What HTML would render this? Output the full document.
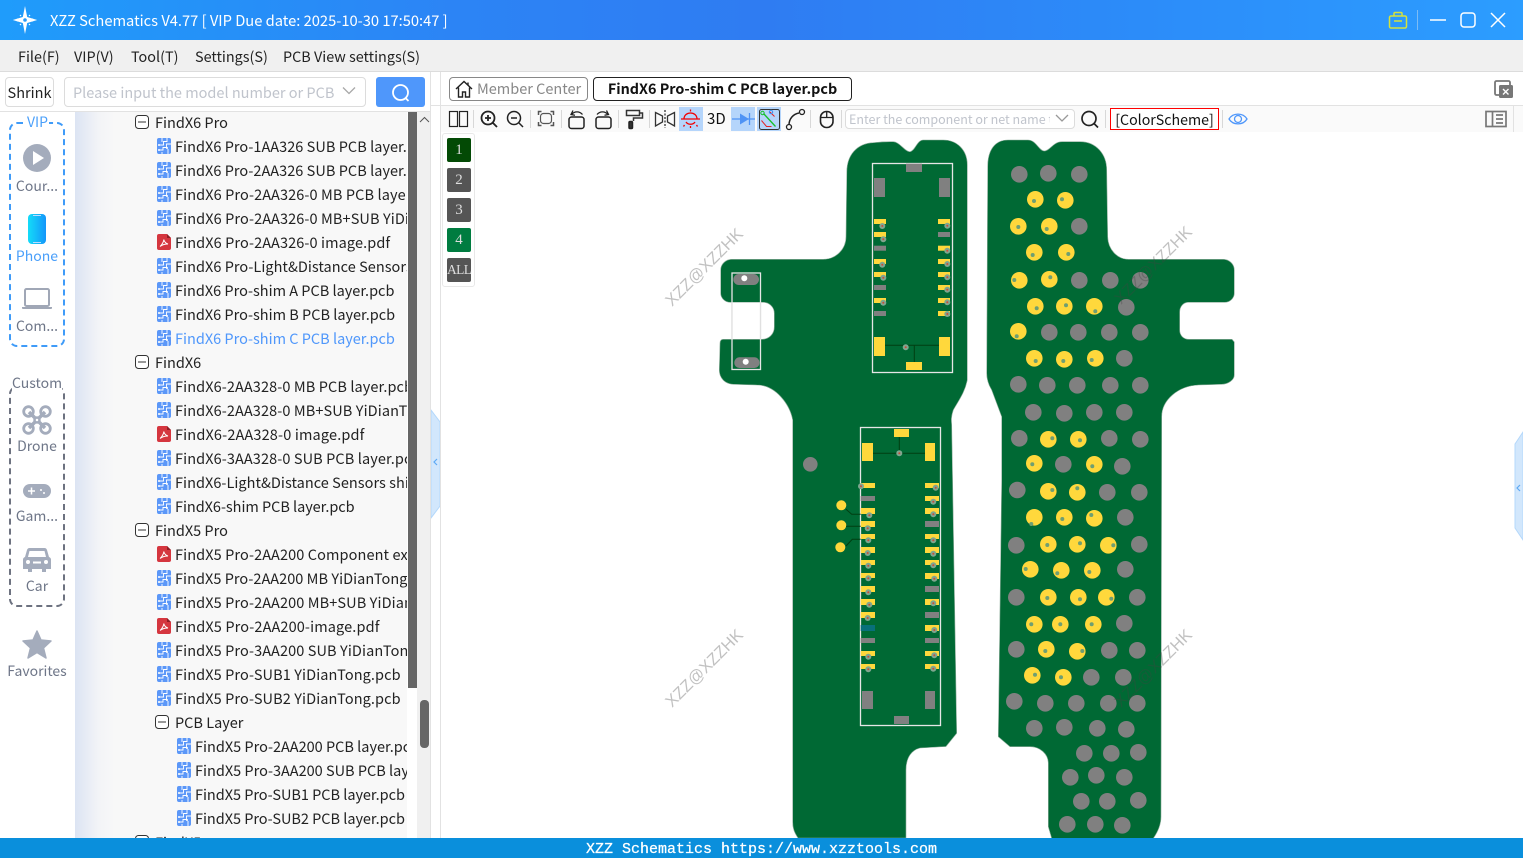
<!DOCTYPE html>
<html><head><meta charset="utf-8"><style>
html,body{margin:0;padding:0;width:1523px;height:858px;overflow:hidden;background:#fff;font-family:"Noto Sans CJK SC","Liberation Sans",sans-serif;color:#222}
.a{position:absolute;white-space:nowrap}
#title{left:0;top:0;width:1523px;height:40px;background:linear-gradient(90deg,#1f9cfb 0,#2c84f5 30%,#2f7cf2 50%,#2c8cf9 75%,#2c9dff 100%)}
#menu{left:0;top:40px;width:1523px;height:31px;background:#f0f0f0;border-bottom:1px solid #dcdcdc}
.m{top:47px;font-size:14.4px;line-height:20px;color:#222}
.box{box-sizing:border-box;border:1px solid #dcdcdc;border-radius:4px;background:#fff}
#tree{left:75px;top:112px;width:332px;height:726px;overflow:hidden;background:linear-gradient(90deg,#dce4f3 0,#f3f4f7 24px,#f8f8f8 40px)}
.r{position:absolute;font-size:14.5px;line-height:20px;white-space:nowrap;color:#222;margin-top:1px}
.d{letter-spacing:.1px}
.e{letter-spacing:.04px}
.s{position:absolute;font-size:14px;line-height:20px;color:#6e7688;text-align:center;width:74px;left:0}
.tb{position:absolute;top:107px;width:24px;height:24px;background:#b5d5fb}
.sep{position:absolute;top:110px;width:1px;height:18px;background:#d8d8d8}
.l{position:absolute;left:447px;width:24px;height:24px;background:#555;color:#ddd;border-radius:2px;font:15px/24px "Liberation Serif",serif;text-align:center}
</style></head><body>
<svg width="0" height="0" style="position:absolute">
<symbol id="pcb" viewBox="0 0 14 16"><rect width="14" height="16" rx="2" fill="#5b97f8"/><path d="M5 0v4M10 0v3.500H6.500V7H2M14 6H9.500v3.500H6V12H2M11 11v5M5 14v2" fill="none" stroke="#fff" stroke-width=".9"/><circle cx="2" cy="7" r="1" fill="#fff"/><circle cx="2" cy="12" r="1" fill="#fff"/><circle cx="10" cy="10" r="1" fill="#fff"/></symbol>
<symbol id="pdf" viewBox="0 0 14 16"><path d="M2 0h8l4 4v10a2 2 0 0 1-2 2H2a2 2 0 0 1-2-2V2a2 2 0 0 1 2-2z" fill="#d5363f"/><path d="M10 0l4 4h-4z" fill="#8f1f26"/><path d="M3 12.500C5 11 7 7 6.700 5.500 7.500 8 9 9.500 11 10 9 10 5.500 10.500 3 12.500z" fill="none" stroke="#fff" stroke-width="1"/></symbol>
<symbol id="min" viewBox="0 0 14 14"><rect x=".5" y=".5" width="13" height="13" rx="3" fill="#fff" stroke="#333"/><path d="M3 7h8" stroke="#333"/></symbol>
</svg>

<div id="title" class="a"></div>
<svg class="a" style="left:12px;top:5px" width="26" height="30" viewBox="0 0 26 30"><path d="M13 1l2.200 11 10 3-10 3L13 29l-2.200-11-10-3 10-3z" fill="#fff"/><circle cx="13" cy="15" r="1.800" fill="#2a9bf8"/><path d="M5.500 13.500v3M20.500 13.500v3M9 11l-1-1M17 11l1-1M9 19l-1 1M17 19l1 1" stroke="#fff" stroke-width="1.200"/></svg>
<div class="a" style="left:50px;top:11px;font-size:14.7px;line-height:20px;color:#fff">XZZ Schematics V4.77 [ VIP Due date: 2025-10-30 17:50:47 ]</div>
<svg class="a" style="left:1380px;top:0" width="143" height="40" fill="none"><path d="M11 16h14a1.500 1.500 0 0 1 1.500 1.500v9a1.500 1.500 0 0 1-1.500 1.500H11a1.500 1.500 0 0 1-1.500-1.500v-9A1.500 1.500 0 0 1 11 16zM14 16v-2.500a1 1 0 0 1 1-1h6a1 1 0 0 1 1 1V16M14 21h8" stroke="#d5e23c" stroke-width="1.500"/><path d="M37.500 10v20" stroke="#7cbcf5"/><path d="M50 20h16" stroke="#fff" stroke-width="1.500"/><rect x="81" y="13" width="14" height="14" rx="3" stroke="#fff" stroke-width="1.500"/><path d="M111 13l14 14M125 13l-14 14" stroke="#fff" stroke-width="1.500"/></svg>

<div id="menu" class="a"></div>
<div class="a m" style="left:18px">File(F)</div>
<div class="a m" style="left:74px">VIP(V)</div>
<div class="a m" style="left:131px">Tool(T)</div>
<div class="a m" style="left:195px">Settings(S)</div>
<div class="a m" style="left:283px">PCB View settings(S)</div>

<div class="a box" style="left:5px;top:77px;width:49px;height:30px;text-align:center;font-size:14.5px;line-height:30px">Shrink</div>
<div class="a box" style="left:64px;top:77px;width:302px;height:30px;font-size:14.5px;line-height:30px;color:#c0c4cc;padding-left:8px">Please input the model number or PCB</div>
<svg class="a" style="left:342px;top:86px" width="14" height="10" fill="none"><path d="M1 1.500l6 6 6-6" stroke="#a8a8a8" stroke-width="1.300"/></svg>
<div class="a" style="left:376px;top:77px;width:49px;height:30px;background:#4f97fb;border-radius:3px"></div>
<svg class="a" style="left:390px;top:82px" width="22" height="21" fill="none"><circle cx="10.500" cy="10.500" r="7.500" stroke="#fff" stroke-width="1.800"/><path d="M15.500 16l3 3" stroke="#fff" stroke-width="1.800"/></svg>
<div class="a" style="left:0;top:111px;width:430px;height:1px;background:#e2e2e2"></div>

<!-- sidebar -->
<div class="a" style="left:9px;top:122px;width:56px;height:225px;box-sizing:border-box;border:2px dashed #3f9bf8;border-radius:8px"></div>
<div class="a" style="left:26px;top:112px;padding:0 1px;background:#fff;font-size:14px;line-height:20px;color:#4a9ffa">VIP</div>
<svg class="a" style="left:23px;top:144px" width="28" height="28"><circle cx="14" cy="14" r="14" fill="#a4acbc"/><path d="M10 7l11 7-11 7z" fill="#fff"/></svg>
<div class="s" style="top:176px">Cour...</div>
<svg class="a" style="left:28px;top:214px" width="18" height="31"><defs><linearGradient id="ph" x1="0" x2="1" y1="0" y2="0"><stop offset="0" stop-color="#14dcf8"/><stop offset="1" stop-color="#1496fa"/></linearGradient></defs><rect width="18" height="30" rx="4" fill="url(#ph)"/><path d="M5 1.500h8M5 28.500h8" stroke="#bdf" stroke-width="1"/></svg>
<div class="s" style="top:246px;color:#4a9ffa">Phone</div>
<svg class="a" style="left:22px;top:288px" width="30" height="21"><rect x="3" y="1" width="24" height="17" rx="1.500" fill="#fff" stroke="#a0a7b6" stroke-width="2"/><path d="M0 19h30v1a1 1 0 0 1-1 1H1a1 1 0 0 1-1-1z" fill="#a0a7b6"/></svg>
<div class="s" style="top:316px">Com...</div>

<div class="a" style="left:9px;top:386px;width:56px;height:221px;box-sizing:border-box;border:2px dashed #6d7280;border-radius:8px"></div>
<div class="a" style="left:12px;top:373px;padding:0;background:#fff;font-size:14px;line-height:20px;color:#6e7688">Custom</div>
<svg class="a" style="left:22px;top:405px" width="30" height="30" fill="none" stroke="#a4acbc"><path d="M7 7l16 16M23 7L7 23" stroke-width="3.500"/><circle cx="6.500" cy="6.500" r="4.800" stroke-width="2.800"/><circle cx="23.500" cy="6.500" r="4.800" stroke-width="2.800"/><circle cx="6.500" cy="23.500" r="4.800" stroke-width="2.800"/><circle cx="23.500" cy="23.500" r="4.800" stroke-width="2.800"/><circle cx="15" cy="15" r="2.500" fill="#fff" stroke-width="2.500"/></svg>
<div class="s" style="top:436px">Drone</div>
<svg class="a" style="left:23px;top:484px" width="28" height="14"><rect width="28" height="14" rx="7" fill="#a4acbc"/><path d="M5 7h7M8.500 3.500v7" stroke="#fff" stroke-width="1.500"/><circle cx="18" cy="6" r="1" fill="#fff"/><circle cx="21" cy="9" r="1" fill="#fff"/></svg>
<div class="s" style="top:506px">Gam...</div>
<svg class="a" style="left:23px;top:548px" width="28" height="24"><path d="M7 0h14a3 3 0 0 1 3 2l2 7a3 3 0 0 1 2 3v9h-5v3h-4v-3H9v3H5v-3H0v-9a3 3 0 0 1 2-3l2-7a3 3 0 0 1 3-2z" fill="#a4acbc"/><path d="M6.500 3h15l1.500 6H5z" fill="#fff"/><circle cx="5" cy="14" r="2" fill="#fff"/><circle cx="23" cy="14" r="2" fill="#fff"/><path d="M10 14.500h8" stroke="#fff" stroke-width="2"/></svg>
<div class="s" style="top:576px">Car</div>
<svg class="a" style="left:22px;top:630px" width="30" height="29"><path d="M15 1l4 9 10 1-7.500 7 2.500 10-9-5.500L6 28l2.500-10L1 11l10-1z" fill="#a4acbc" stroke="#a4acbc" stroke-linejoin="round" stroke-width="1.500"/></svg>
<div class="s" style="top:661px">Favorites</div>

<!-- tree: coordinates relative to #tree (left 75, top 112) -->
<div id="tree" class="a">
<svg style="position:absolute;left:60px;top:3px" width="14" height="14"><use href="#min"/></svg><div class="r" style="left:80px;top:0">FindX6 Pro</div>
<svg style="position:absolute;left:82px;top:26px" width="14" height="16"><use href="#pcb"/></svg><div class="r e" style="left:100px;top:24px">FindX6 Pro-1AA326 SUB PCB layer.pcb</div>
<svg style="position:absolute;left:82px;top:50px" width="14" height="16"><use href="#pcb"/></svg><div class="r e" style="left:100px;top:48px">FindX6 Pro-2AA326 SUB PCB layer.pcb</div>
<svg style="position:absolute;left:82px;top:74px" width="14" height="16"><use href="#pcb"/></svg><div class="r d" style="left:100px;top:72px">FindX6 Pro-2AA326-0 MB PCB layer.pcb</div>
<svg style="position:absolute;left:82px;top:98px" width="14" height="16"><use href="#pcb"/></svg><div class="r d" style="left:100px;top:96px">FindX6 Pro-2AA326-0 MB+SUB YiDianTong.pcb</div>
<svg style="position:absolute;left:82px;top:122px" width="14" height="16"><use href="#pdf"/></svg><div class="r d" style="left:100px;top:120px">FindX6 Pro-2AA326-0 image.pdf</div>
<svg style="position:absolute;left:82px;top:146px" width="14" height="16"><use href="#pcb"/></svg><div class="r e" style="left:100px;top:144px">FindX6 Pro-Light&amp;Distance Sensors shim.pcb</div>
<svg style="position:absolute;left:82px;top:170px" width="14" height="16"><use href="#pcb"/></svg><div class="r" style="left:100px;top:168px">FindX6 Pro-shim A PCB layer.pcb</div>
<svg style="position:absolute;left:82px;top:194px" width="14" height="16"><use href="#pcb"/></svg><div class="r" style="left:100px;top:192px">FindX6 Pro-shim B PCB layer.pcb</div>
<svg style="position:absolute;left:82px;top:218px" width="14" height="16"><use href="#pcb"/></svg><div class="r" style="left:100px;top:216px;color:#4f97fb">FindX6 Pro-shim C PCB layer.pcb</div>
<svg style="position:absolute;left:60px;top:243px" width="14" height="14"><use href="#min"/></svg><div class="r" style="left:80px;top:240px">FindX6</div>
<svg style="position:absolute;left:82px;top:266px" width="14" height="16"><use href="#pcb"/></svg><div class="r d" style="left:100px;top:264px">FindX6-2AA328-0 MB PCB layer.pcb</div>
<svg style="position:absolute;left:82px;top:290px" width="14" height="16"><use href="#pcb"/></svg><div class="r d" style="left:100px;top:288px">FindX6-2AA328-0 MB+SUB YiDianTong.pcb</div>
<svg style="position:absolute;left:82px;top:314px" width="14" height="16"><use href="#pdf"/></svg><div class="r" style="left:100px;top:312px;letter-spacing:.16px">FindX6-2AA328-0 image.pdf</div>
<svg style="position:absolute;left:82px;top:338px" width="14" height="16"><use href="#pcb"/></svg><div class="r d" style="left:100px;top:336px">FindX6-3AA328-0 SUB PCB layer.pcb</div>
<svg style="position:absolute;left:82px;top:362px" width="14" height="16"><use href="#pcb"/></svg><div class="r e" style="left:100px;top:360px">FindX6-Light&amp;Distance Sensors shim.pcb</div>
<svg style="position:absolute;left:82px;top:386px" width="14" height="16"><use href="#pcb"/></svg><div class="r" style="left:100px;top:384px;letter-spacing:-.04px">FindX6-shim PCB layer.pcb</div>
<svg style="position:absolute;left:60px;top:411px" width="14" height="14"><use href="#min"/></svg><div class="r" style="left:80px;top:408px">FindX5 Pro</div>
<svg style="position:absolute;left:82px;top:434px" width="14" height="16"><use href="#pdf"/></svg><div class="r d" style="left:100px;top:432px">FindX5 Pro-2AA200 Component explosion.pdf</div>
<svg style="position:absolute;left:82px;top:458px" width="14" height="16"><use href="#pcb"/></svg><div class="r e" style="left:100px;top:456px">FindX5 Pro-2AA200 MB YiDianTong.pcb</div>
<svg style="position:absolute;left:82px;top:482px" width="14" height="16"><use href="#pcb"/></svg><div class="r d" style="left:100px;top:480px">FindX5 Pro-2AA200 MB+SUB YiDianTong.pcb</div>
<svg style="position:absolute;left:82px;top:506px" width="14" height="16"><use href="#pdf"/></svg><div class="r" style="left:100px;top:504px;letter-spacing:.13px">FindX5 Pro-2AA200-image.pdf</div>
<svg style="position:absolute;left:82px;top:530px" width="14" height="16"><use href="#pcb"/></svg><div class="r d" style="left:100px;top:528px">FindX5 Pro-3AA200 SUB YiDianTong.pcb</div>
<svg style="position:absolute;left:82px;top:554px" width="14" height="16"><use href="#pcb"/></svg><div class="r d" style="left:100px;top:552px">FindX5 Pro-SUB1 YiDianTong.pcb</div>
<svg style="position:absolute;left:82px;top:578px" width="14" height="16"><use href="#pcb"/></svg><div class="r d" style="left:100px;top:576px">FindX5 Pro-SUB2 YiDianTong.pcb</div>
<svg style="position:absolute;left:80px;top:603px" width="14" height="14"><use href="#min"/></svg><div class="r" style="left:100px;top:600px">PCB Layer</div>
<svg style="position:absolute;left:102px;top:626px" width="14" height="16"><use href="#pcb"/></svg><div class="r" style="left:120px;top:624px">FindX5 Pro-2AA200 PCB layer.pcb</div>
<svg style="position:absolute;left:102px;top:650px" width="14" height="16"><use href="#pcb"/></svg><div class="r" style="left:120px;top:648px">FindX5 Pro-3AA200 SUB PCB layer.pcb</div>
<svg style="position:absolute;left:102px;top:674px" width="14" height="16"><use href="#pcb"/></svg><div class="r" style="left:120px;top:672px;letter-spacing:-.03px">FindX5 Pro-SUB1 PCB layer.pcb</div>
<svg style="position:absolute;left:102px;top:698px" width="14" height="16"><use href="#pcb"/></svg><div class="r" style="left:120px;top:696px;letter-spacing:-.03px">FindX5 Pro-SUB2 PCB layer.pcb</div>
<svg style="position:absolute;left:60px;top:723px" width="14" height="14"><use href="#min"/></svg><div class="r" style="left:80px;top:720px">FindX5</div>
</div>
<div class="a" style="left:408px;top:112px;width:9px;height:576px;background:#666"></div>
<div class="a" style="left:417px;top:112px;width:13px;height:726px;background:#f0f0f0"></div>
<div class="a" style="left:420px;top:700px;width:9px;height:48px;background:#666;border-radius:4px"></div>
<svg class="a" style="left:419px;top:116px" width="11" height="8" fill="none"><path d="M1 6l4.500-4.500L10 6" stroke="#555"/></svg>
<div class="a" style="left:430px;top:72px;width:1px;height:766px;background:#e2e2e2"></div>
<div class="a" style="left:440px;top:72px;width:1px;height:766px;background:#e2e2e2"></div>
<svg class="a" style="left:431px;top:408px" width="9" height="112"><path d="M0 2l9 12v84l-9 12z" fill="#d2e7fc" stroke="#b4d8fb"/><path d="M6 51l-3 3 3 3" fill="none" stroke="#5ea9f5" stroke-width="1.200"/></svg>
<svg class="a" style="left:1514px;top:430px" width="9" height="112"><path d="M9 2L1 14v84l8 12z" fill="#d2e7fc" stroke="#b4d8fb"/><path d="M6 55l-3 3 3 3" fill="none" stroke="#5ea9f5" stroke-width="1.200"/></svg>

<!-- tabs -->
<div class="a" style="left:431px;top:105px;width:1092px;height:1px;background:#e2e2e2"></div>
<div class="a box" style="left:449px;top:77px;width:139px;height:24px;border-color:#888;font-size:14.5px;line-height:22px;color:#888;padding-left:27px">Member Center</div>
<svg class="a" style="left:455px;top:80px" width="18" height="18" fill="none" stroke="#222" stroke-width="1.400"><path d="M1 9l8-7.500L17 9M3.500 7.500V17h4v-5h3v5h4V7.500M13 2.500v3"/></svg>
<div class="a box" style="left:593px;top:77px;width:259px;height:24px;border-color:#222;font-size:14.35px;line-height:22px;font-weight:700;color:#111;text-align:center">FindX6 Pro-shim C PCB layer.pcb</div>
<svg class="a" style="left:1494px;top:80px" width="20" height="19"><rect x="1" y="1" width="15" height="14" rx="1.500" fill="none" stroke="#777" stroke-width="1.800"/><rect x="5" y="5" width="14" height="13" rx="1.500" fill="#777"/><path d="M9 9l5.500 5.500M14.500 9L9 14.500" stroke="#fff" stroke-width="1.400"/></svg>

<!-- toolbar -->
<div class="a" style="left:441px;top:106px;width:1082px;height:26px;background:#fafafa"></div>
<div class="tb" style="left:679px"></div><div class="tb" style="left:731px"></div><div class="tb" style="left:757px"></div>
<div class="sep" style="left:473px"></div><div class="sep" style="left:530px"></div><div class="sep" style="left:561px"></div><div class="sep" style="left:618px"></div><div class="sep" style="left:649px"></div><div class="sep" style="left:810px"></div><div class="sep" style="left:841px"></div><div class="sep" style="left:1105px"></div><div class="sep" style="left:1222px"></div>
<svg class="a" style="left:441px;top:106px" width="400" height="26" fill="none" stroke="#222" stroke-width="1.500">
<rect x="8.500" y="5.500" width="8" height="15" stroke-width="1.200"/><rect x="18.500" y="5.500" width="8" height="15" stroke-width="1.200"/>
<circle cx="47" cy="12" r="6.500" stroke-width="1.800"/><path d="M52 17l4 4M44 12h6M47 9v6" stroke-width="1.800"/>
<circle cx="73" cy="12" r="6.500"/><path d="M78 17l4 4M70 12h6"/>
<path d="M97.500 9V5.500h3M109.500 5.500h3V9M112.500 16v3.500h-3M100.500 19.500h-3V16" stroke="#555"/><rect x="99.500" y="7.500" width="11" height="10" rx="3" stroke="#555" stroke-width="1.200"/>
<rect x="128" y="11" width="15" height="11.500" rx="2.500" stroke-width="1.500"/><path d="M130.500 8.500c3-3.500 8-3.500 11 0M132 4.500l-2 4 4 .8" stroke-width="1.300"/>
<rect x="155" y="11" width="15" height="11.500" rx="2.500" stroke-width="1.500"/><path d="M167 8.500c-3-3.500-8-3.500-11 0M165.500 4.500l2 4-4 .8" stroke-width="1.300"/>
<path d="M185.500 4.500h13v5h-13zM198.500 7h3v5h-9v3" stroke="#333"/><rect x="188" y="15.500" width="3.500" height="7" rx="1" fill="#333"/>
<path d="M214.500 6.500l7 3.500v6l-7 4zM233.500 6.500l-7 3.500v6l7 4z" stroke="#333" stroke-width="1.300"/><path d="M224 4v18" stroke="#333" stroke-width="1.300" stroke-dasharray="2 1.500"/>
<path d="M240 13h19M243 13c0-8 13-8 13 0M249.500 3.500v2M245 16c2 3 7 3 9 0M243.500 19l-1 1.500M249.500 20v2M255.500 19l1 1.500" stroke="#f20000" stroke-width="1.300"/>
<path d="M291 13h23" stroke="#4f93f5" stroke-width="1.200"/><path d="M299 7.500l9 5.500-9 5.500z" fill="#4f93f5" stroke="none"/><path d="M308.500 7v12" stroke="#4f93f5" stroke-width="1.300"/>
<rect x="318.500" y="3.500" width="20" height="20" rx="2" stroke="#333" stroke-width="1"/><path d="M322.500 7.500l12 13" stroke="#16c02a" stroke-width="1.300"/><path d="M320.500 14.500l5 6h5M329 6l4.500 4.500" stroke="#e52222" stroke-width="1"/><circle cx="330" cy="6" r="1.700" stroke="#3c8ef0" stroke-width="1"/><circle cx="321.500" cy="7" r="1.700" stroke="#16c02a" stroke-width="1"/>
<path d="M348 19c0-6 4-11 10-12" stroke-width="1.500"/><circle cx="361" cy="6" r="2.500" stroke-width="1.300"/><circle cx="348" cy="21" r="2.500" stroke-width="1.300"/>
<rect x="379.500" y="5.500" width="12.500" height="16" rx="6" stroke-width="1.600"/><path d="M385.700 5.500v6M379.500 11.500h12.500" stroke-width="1.300"/>
</svg>
<div class="a" style="left:707px;top:109px;font-size:15px;line-height:20px;color:#111">3D</div>
<div class="a box" style="left:845px;top:109px;width:230px;height:20px;font-size:12.5px;line-height:18px;color:#c0c4cc;padding-left:3px"><div style="width:201px;overflow:hidden">Enter the component or net name to search</div></div>
<svg class="a" style="left:1055px;top:114px" width="14" height="9" fill="none"><path d="M1 1l6 6 6-6" stroke="#999" stroke-width="1.300"/></svg>
<svg class="a" style="left:1080px;top:109px" width="20" height="21" fill="none" stroke="#222" stroke-width="1.700"><circle cx="9" cy="9.500" r="7"/><path d="M14 14.500l4 4"/></svg>
<div class="a" style="left:1110px;top:108px;width:109px;height:22px;box-sizing:border-box;border:1px solid #f00;background:#fff;font-size:14.2px;line-height:22px;text-align:center;color:#111">[ColorScheme]</div>
<svg class="a" style="left:1228px;top:110px" width="20" height="18" fill="none" stroke="#4f97fb" stroke-width="1.300"><path d="M1 9c4-6.500 14-6.500 18 0-4 6.500-14 6.500-18 0z"/><circle cx="10" cy="9" r="3.500"/></svg>
<svg class="a" style="left:1485px;top:110px" width="22" height="18" fill="none" stroke="#777" stroke-width="1.700"><rect x="1" y="1.500" width="20" height="15"/><path d="M7.500 1.500v15M11 5h7M11 9h7M11 13h7" /></svg>
<div class="a" style="left:1513px;top:106px;width:1px;height:26px;background:#e2e2e2"></div>

<!-- board view -->
<svg class="a" style="left:0;top:0" width="1523" height="858">
<path fill="#006934" stroke="#8fae9c" stroke-width=".6" d="M873 142.700C880 142 887 141.500 893.300 141.700C900 142 905 152 910 151.700C915 151 917 140 923.300 140L943.300 140C957 140 967.300 150 967.300 165L967.300 380C965 392 959 400 953.300 410C951 417 951.300 420 951.700 425L956.700 733.300L946 746.500L920 748C912 750 906 757 906 770L906 838L798 838C794 832 792.700 828 792.700 822L792.700 420C790 405 776 385 756.700 385L733.300 384.300C725 384 719.300 378 719.300 370L720 343.300C720 341 721 339.300 723.300 339.300L761.700 339.300C769 339.300 774.300 334 774.300 326.700L774.300 313.300C774.300 307 769 302.300 763.300 302.300L730 302.300C725 302.300 720.700 298 720.700 293.300L720.700 270C720.700 264 726 259.300 731.700 259.300L823.300 259.300C836 259.300 846 249 846 236.700L846.800 171.700C847 155 857 143.500 873 142.700Z"/>
<path fill="#006934" stroke="#8fae9c" stroke-width=".6" d="M1028 140C1036 140 1039 151 1044.300 151C1050 151 1053 141.700 1062 141.700L1080 141.700C1096 141.700 1106.700 154 1106.700 170L1107.700 236.700C1108 249 1117 259.300 1128.300 259.300L1223.300 259.300C1229 259.300 1234.300 264 1234.300 270L1234.300 293.300C1234.300 298 1230 302.300 1225 302.300L1188.300 302.300C1183 302.300 1179.700 307 1179.700 312L1179.700 330C1179.700 335 1183 339.300 1189 339.300L1232 339.300L1234.300 342L1234.300 375C1234.300 380 1228 384.300 1221.700 384.300L1198.300 385C1178 386 1161.700 400 1161.700 416.700L1161 816.700C1161 826 1157 833 1153.300 838.300L1051.700 838.300L1048.300 826.700L1048.300 763.300C1048.300 754 1040 746.700 1030 746.700L1010 746.700L998.300 736.700L1001.700 480L1001.700 416.700L991.700 390C988 384 986.700 378 986.700 373.300L987.700 166.700C987.700 150 995 140 1008 140Z"/>
<g fill="#fff" fill-opacity="0" stroke="#e6e6e6" stroke-width="1.300"><rect x="872.500" y="163.500" width="80" height="209"/><rect x="860.500" y="427.500" width="80" height="298"/><rect x="732" y="273" width="28.500" height="96.500"/></g>
<path d="M732.500 302.500H760V339H732.500z" fill="#fff"/><path d="M732 302.500V339M760.500 302.500V339" stroke="#e0e0e0" stroke-width="1.300"/>
<rect x="733.300" y="274" width="25.700" height="11" rx="5.500" fill="#808080"/><circle cx="744.300" cy="278.300" r="3" fill="#fff"/>
<rect x="734.300" y="357.300" width="25.300" height="10.700" rx="5.300" fill="#808080"/><circle cx="745.700" cy="361.700" r="3" fill="#fff"/>
<g fill="#808080">
<rect x="906" y="163.700" width="16" height="8.300"/><rect x="874" y="178" width="11" height="19"/><rect x="939" y="178" width="11" height="19"/>
<rect x="874" y="245.700" width="12" height="5"/><rect x="874" y="285" width="12" height="5"/><rect x="874" y="311" width="12" height="5"/><rect x="938" y="232" width="12" height="5"/>
<rect x="894" y="716" width="15" height="8"/><rect x="862" y="691" width="11" height="18"/><rect x="925" y="691" width="10" height="18"/>
<rect x="860.700" y="496" width="14.300" height="5"/><rect x="860.700" y="638" width="14.300" height="5"/><rect x="925" y="521" width="14" height="6"/><rect x="925" y="586" width="14" height="6"/><rect x="925" y="612" width="14" height="6"/><rect x="925" y="638" width="14" height="5"/>
<circle cx="810.300" cy="464.300" r="7.300"/>
</g>
<rect x="860.700" y="625" width="14.300" height="6" fill="#08707a"/>
<g fill="#ffd83c">
<rect x="874" y="219" width="12" height="5"/><rect x="874" y="232" width="12" height="5"/><rect x="874" y="259" width="12" height="5"/><rect x="874" y="272" width="12" height="5"/><rect x="874" y="298" width="12" height="5"/>
<rect x="938" y="219" width="12" height="5"/><rect x="938" y="245.700" width="12" height="5"/><rect x="938" y="259" width="12" height="5"/><rect x="938" y="272" width="12" height="5"/><rect x="938" y="285" width="12" height="5"/><rect x="938" y="298" width="12" height="5"/><rect x="938" y="311" width="12" height="5"/>
<rect x="874" y="337" width="11" height="19"/><rect x="939" y="337" width="11" height="19"/><rect x="906" y="362" width="16" height="8"/>
<rect x="894" y="429" width="15" height="8"/><rect x="862" y="443" width="11" height="18"/><rect x="925" y="443" width="10" height="18"/>
<rect x="860.700" y="483" width="14.300" height="5"/><rect x="860.700" y="508" width="14.300" height="6"/><rect x="860.700" y="521" width="14.300" height="6"/><rect x="860.700" y="534" width="14.300" height="5"/><rect x="860.700" y="547" width="14.300" height="6"/><rect x="860.700" y="560" width="14.300" height="5"/><rect x="860.700" y="573" width="14.300" height="5"/><rect x="860.700" y="586" width="14.300" height="6"/><rect x="860.700" y="599" width="14.300" height="6"/><rect x="860.700" y="612" width="14.300" height="6"/><rect x="860.700" y="651" width="14.300" height="5"/><rect x="860.700" y="664" width="14.300" height="5"/>
<rect x="925" y="483" width="14" height="5"/><rect x="925" y="496" width="14" height="5"/><rect x="925" y="508" width="14" height="6"/><rect x="925" y="534" width="14" height="5"/><rect x="925" y="547" width="14" height="6"/><rect x="925" y="560" width="14" height="5"/><rect x="925" y="573" width="14" height="6"/><rect x="925" y="599" width="14" height="6"/><rect x="925" y="625" width="14" height="6"/><rect x="925" y="651" width="14" height="5"/><rect x="925" y="664" width="14" height="5"/>
<circle cx="841.300" cy="505.300" r="5"/><circle cx="841.300" cy="525.300" r="5"/><circle cx="840.300" cy="547.300" r="5"/>
</g>
<g fill="none" stroke="#003f12" stroke-width="1"><path d="M885 345.300H939M914.300 345.300V362M873 453.300H925M899.300 437V453.300M846 509.300L851.700 514.300H860.700M846 526.300H860.700M846 546L852.300 539.300H860.700"/></g>
<g fill="#7fa68f">
<circle cx="882.300" cy="226" r="3"/><circle cx="883.300" cy="239.300" r="3"/><circle cx="882.300" cy="264.700" r="3"/><circle cx="883.300" cy="277.700" r="3"/><circle cx="883.300" cy="302.700" r="3"/><circle cx="947.300" cy="225.700" r="3"/><circle cx="947.300" cy="250.700" r="3"/><circle cx="947.300" cy="264" r="3"/><circle cx="947.300" cy="277.300" r="3"/><circle cx="947.300" cy="289.700" r="3"/><circle cx="947.300" cy="302.300" r="3"/><circle cx="947.300" cy="314" r="3"/><circle cx="905.700" cy="347.300" r="3"/><circle cx="899.300" cy="453.300" r="3"/>
<circle cx="861" cy="486.300" r="3"/><circle cx="869.300" cy="515.300" r="3"/><circle cx="867.700" cy="528.300" r="3"/><circle cx="868.300" cy="540.300" r="3"/><circle cx="867.700" cy="553" r="3"/><circle cx="868.300" cy="565.700" r="3"/><circle cx="868.300" cy="578.300" r="3"/><circle cx="868.300" cy="592.300" r="3"/><circle cx="869.300" cy="604.700" r="3"/><circle cx="867.700" cy="618" r="3"/><circle cx="868.300" cy="656.700" r="3"/><circle cx="868.300" cy="669.300" r="3"/>
<circle cx="935.700" cy="487.700" r="3"/><circle cx="933.300" cy="501.700" r="3"/><circle cx="933.300" cy="514.300" r="3"/><circle cx="933.300" cy="540.300" r="3"/><circle cx="933.300" cy="553.700" r="3"/><circle cx="933.300" cy="565.300" r="3"/><circle cx="934.300" cy="578.700" r="3"/><circle cx="933.300" cy="603.300" r="3"/><circle cx="934.300" cy="630" r="3"/><circle cx="934.300" cy="655.300" r="3"/><circle cx="933.300" cy="668.700" r="3"/>
</g>
<g fill="#cc4a3a">
<circle cx="882.300" cy="226" r="1"/><circle cx="883.300" cy="239.300" r="1"/><circle cx="882.300" cy="264.700" r="1"/><circle cx="883.300" cy="277.700" r="1"/><circle cx="883.300" cy="302.700" r="1"/><circle cx="947.300" cy="225.700" r="1"/><circle cx="947.300" cy="250.700" r="1"/><circle cx="947.300" cy="264" r="1"/><circle cx="947.300" cy="277.300" r="1"/><circle cx="947.300" cy="289.700" r="1"/><circle cx="947.300" cy="302.300" r="1"/><circle cx="947.300" cy="314" r="1"/><circle cx="905.700" cy="347.300" r="1"/><circle cx="899.300" cy="453.300" r="1"/>
<circle cx="861" cy="486.300" r="1"/><circle cx="869.300" cy="515.300" r="1"/><circle cx="867.700" cy="528.300" r="1"/><circle cx="868.300" cy="540.300" r="1"/><circle cx="867.700" cy="553" r="1"/><circle cx="868.300" cy="565.700" r="1"/><circle cx="868.300" cy="578.300" r="1"/><circle cx="868.300" cy="592.300" r="1"/><circle cx="869.300" cy="604.700" r="1"/><circle cx="867.700" cy="618" r="1"/><circle cx="868.300" cy="656.700" r="1"/><circle cx="868.300" cy="669.300" r="1"/>
<circle cx="935.700" cy="487.700" r="1"/><circle cx="933.300" cy="501.700" r="1"/><circle cx="933.300" cy="514.300" r="1"/><circle cx="933.300" cy="540.300" r="1"/><circle cx="933.300" cy="553.700" r="1"/><circle cx="933.300" cy="565.300" r="1"/><circle cx="934.300" cy="578.700" r="1"/><circle cx="933.300" cy="603.300" r="1"/><circle cx="934.300" cy="630" r="1"/><circle cx="934.300" cy="655.300" r="1"/><circle cx="933.300" cy="668.700" r="1"/>
</g>
<!-- gray vias -->
<g fill="#808080">
<circle cx="1019.300" cy="174.300" r="8.300"/><circle cx="1048.300" cy="173.300" r="8.300"/><circle cx="1079.300" cy="174.300" r="8.300"/><circle cx="1079.300" cy="226.300" r="8.300"/><circle cx="1079.300" cy="280.300" r="8.300"/><circle cx="1110.300" cy="280.300" r="8.300"/><circle cx="1140.300" cy="280.300" r="8.300"/><circle cx="1126.300" cy="307.300" r="8.300"/><circle cx="1049.300" cy="332.300" r="8.300"/><circle cx="1078.300" cy="332.300" r="8.300"/><circle cx="1109.300" cy="332.300" r="8.300"/><circle cx="1140.300" cy="332.300" r="8.300"/><circle cx="1124.300" cy="358.300" r="8.300"/><circle cx="1018.300" cy="384.300" r="8.300"/><circle cx="1047.300" cy="385.300" r="8.300"/><circle cx="1077.300" cy="385.300" r="8.300"/><circle cx="1110.300" cy="385.300" r="8.300"/><circle cx="1140.300" cy="385.300" r="8.300"/><circle cx="1033.300" cy="412.300" r="8.300"/><circle cx="1064.300" cy="413.300" r="8.300"/><circle cx="1094.300" cy="412.300" r="8.300"/><circle cx="1124.300" cy="412.300" r="8.300"/><circle cx="1019.300" cy="438.300" r="8.300"/><circle cx="1109.300" cy="438.300" r="8.300"/><circle cx="1140.300" cy="439.300" r="8.300"/><circle cx="1063.300" cy="464.300" r="8.300"/><circle cx="1122.300" cy="466.300" r="8.300"/>
<circle cx="1017.300" cy="490" r="8.300"/><circle cx="1107.300" cy="492.300" r="8.300"/><circle cx="1139.300" cy="492.300" r="8.300"/><circle cx="1125.300" cy="517.300" r="8.300"/><circle cx="1016.300" cy="545.300" r="8.300"/><circle cx="1139.300" cy="544.300" r="8.300"/><circle cx="1125.300" cy="569.300" r="8.300"/><circle cx="1016.300" cy="597.300" r="8.300"/><circle cx="1137.300" cy="597.300" r="8.300"/><circle cx="1124.300" cy="623.300" r="8.300"/><circle cx="1016.300" cy="649.300" r="8.300"/><circle cx="1109.300" cy="650.300" r="8.300"/><circle cx="1137.300" cy="650.300" r="8.300"/><circle cx="1091.300" cy="677.300" r="8.300"/><circle cx="1123.300" cy="677.300" r="8.300"/><circle cx="1014.300" cy="701.300" r="8.300"/><circle cx="1045.300" cy="703.300" r="8.300"/><circle cx="1076.300" cy="703.300" r="8.300"/><circle cx="1108.300" cy="703.300" r="8.300"/><circle cx="1137.300" cy="703.300" r="8.300"/><circle cx="1034.300" cy="728.300" r="8.300"/><circle cx="1064.300" cy="727.300" r="8.300"/><circle cx="1097.300" cy="728.300" r="8.300"/><circle cx="1126.300" cy="729.300" r="8.300"/><circle cx="1084.300" cy="753.300" r="8.300"/><circle cx="1111.300" cy="753.300" r="8.300"/><circle cx="1138.300" cy="752.300" r="8.300"/><circle cx="1070.300" cy="777.300" r="8.300"/><circle cx="1096.300" cy="775.300" r="8.300"/><circle cx="1124.300" cy="777.300" r="8.300"/><circle cx="1081.300" cy="801.300" r="8.300"/><circle cx="1107.300" cy="801.300" r="8.300"/><circle cx="1138.300" cy="800.300" r="8.300"/><circle cx="1067.300" cy="824.300" r="8.300"/><circle cx="1095.300" cy="824.300" r="8.300"/><circle cx="1122.300" cy="825.300" r="8.300"/>
</g>
<!-- yellow -->
<g fill="#ffd83c">
<circle cx="1035.300" cy="199.300" r="8.300"/><circle cx="1065.300" cy="200.300" r="8.300"/><circle cx="1018.300" cy="226.300" r="8.300"/><circle cx="1049.300" cy="226.300" r="8.300"/><circle cx="1034.300" cy="252.300" r="8.300"/><circle cx="1066.300" cy="252.300" r="8.300"/><circle cx="1019.300" cy="280.300" r="8.300"/><circle cx="1049.300" cy="279.300" r="8.300"/><circle cx="1035.300" cy="306.300" r="8.300"/><circle cx="1064.300" cy="306.300" r="8.300"/><circle cx="1094.300" cy="306.300" r="8.300"/><circle cx="1018.300" cy="331.300" r="8.300"/><circle cx="1034.300" cy="358.300" r="8.300"/><circle cx="1064.300" cy="359.300" r="8.300"/><circle cx="1095.300" cy="358.300" r="8.300"/><circle cx="1048.300" cy="439.300" r="8.300"/><circle cx="1078.300" cy="439.300" r="8.300"/><circle cx="1034.300" cy="463.300" r="8.300"/><circle cx="1094.300" cy="464.300" r="8.300"/>
<circle cx="1048.300" cy="491.300" r="8.300"/><circle cx="1077.300" cy="492.300" r="8.300"/><circle cx="1034.300" cy="517.300" r="8.300"/><circle cx="1064.300" cy="517.300" r="8.300"/><circle cx="1094.300" cy="518.300" r="8.300"/><circle cx="1048.300" cy="544.300" r="8.300"/><circle cx="1077.300" cy="544.300" r="8.300"/><circle cx="1108.300" cy="545.300" r="8.300"/><circle cx="1030.300" cy="569.300" r="8.300"/><circle cx="1061.300" cy="570.300" r="8.300"/><circle cx="1092.300" cy="570.300" r="8.300"/><circle cx="1048.300" cy="597.300" r="8.300"/><circle cx="1078.300" cy="597.300" r="8.300"/><circle cx="1106.300" cy="597.300" r="8.300"/><circle cx="1034.300" cy="624.300" r="8.300"/><circle cx="1060.300" cy="624.300" r="8.300"/><circle cx="1093.300" cy="624.300" r="8.300"/><circle cx="1046.300" cy="649.300" r="8.300"/><circle cx="1077.300" cy="651.300" r="8.300"/><circle cx="1032.300" cy="675.300" r="8.300"/><circle cx="1063.300" cy="677.300" r="8.300"/>
</g>
<g fill="#6f9f72">
<circle cx="1034" cy="201" r="2"/><circle cx="1062" cy="199.300" r="2"/><circle cx="1018.300" cy="227" r="2"/><circle cx="1046.700" cy="229" r="2"/><circle cx="1032.700" cy="255" r="2"/><circle cx="1068.300" cy="254" r="2"/><circle cx="1014.300" cy="280" r="2"/><circle cx="1050.300" cy="277.300" r="2"/><circle cx="1036.700" cy="308.300" r="2"/><circle cx="1066" cy="305.300" r="2"/><circle cx="1095.300" cy="311.300" r="2"/><circle cx="1016.700" cy="336.300" r="2"/><circle cx="1035.700" cy="361" r="2"/><circle cx="1063.300" cy="361" r="2"/><circle cx="1091.700" cy="360" r="2"/><circle cx="1052.300" cy="438.300" r="2"/><circle cx="1080" cy="440.300" r="2"/><circle cx="1032.300" cy="464.300" r="2"/><circle cx="1092.300" cy="466.300" r="2"/>
<circle cx="1052.300" cy="490" r="2"/><circle cx="1077.300" cy="488.300" r="2"/><circle cx="1031.300" cy="524" r="2"/><circle cx="1062.300" cy="519" r="2"/><circle cx="1091.300" cy="515" r="2"/><circle cx="1047.300" cy="545" r="2"/><circle cx="1080" cy="543.300" r="2"/><circle cx="1113.300" cy="545.300" r="2"/><circle cx="1025.700" cy="569" r="2"/><circle cx="1057.300" cy="573.300" r="2"/><circle cx="1089.300" cy="572" r="2"/><circle cx="1047.300" cy="598" r="2"/><circle cx="1080" cy="599.300" r="2"/><circle cx="1111.300" cy="598.700" r="2"/><circle cx="1031.300" cy="624.300" r="2"/><circle cx="1060.300" cy="624.300" r="2"/><circle cx="1091.700" cy="624.300" r="2"/><circle cx="1045.300" cy="651" r="2"/><circle cx="1082.300" cy="651" r="2"/><circle cx="1035" cy="674.700" r="2"/><circle cx="1061" cy="677.300" r="2"/>
</g>
<!-- watermarks -->
<g font-family="Liberation Sans,sans-serif" font-size="16.5" fill="#444" fill-opacity=".33" text-anchor="middle">
<text transform="translate(708,271) rotate(-45)">XZZ@XZZHK</text>
<text transform="translate(1157,269) rotate(-45)">XZZ@XZZHK</text>
<text transform="translate(708,672) rotate(-45)">XZZ@XZZHK</text>
<text transform="translate(1157,672) rotate(-45)">XZZ@XZZHK</text>
</g>
</svg>

<!-- layers -->
<div class="a" style="left:442px;top:133px;width:33px;height:154px;box-sizing:border-box;border:1px solid #e8e8e8;border-radius:3px;background:#fff"></div>
<div class="l" style="top:138px;background:#034a05">1</div>
<div class="l" style="top:168px">2</div>
<div class="l" style="top:198px">3</div>
<div class="l" style="top:228px;background:#007c40">4</div>
<div class="l" style="top:258px;font-size:13.500px;letter-spacing:-.6px">ALL</div>

<!-- footer -->
<div class="a" style="left:0;top:838px;width:1523px;height:20px;background:#0a8fdc;color:#fff;font:15px/21px 'Liberation Mono',monospace;text-align:center;-webkit-text-stroke:.25px #fff;padding-top:1px;box-sizing:border-box">XZZ Schematics https://www.xzztools.com</div>
</body></html>
